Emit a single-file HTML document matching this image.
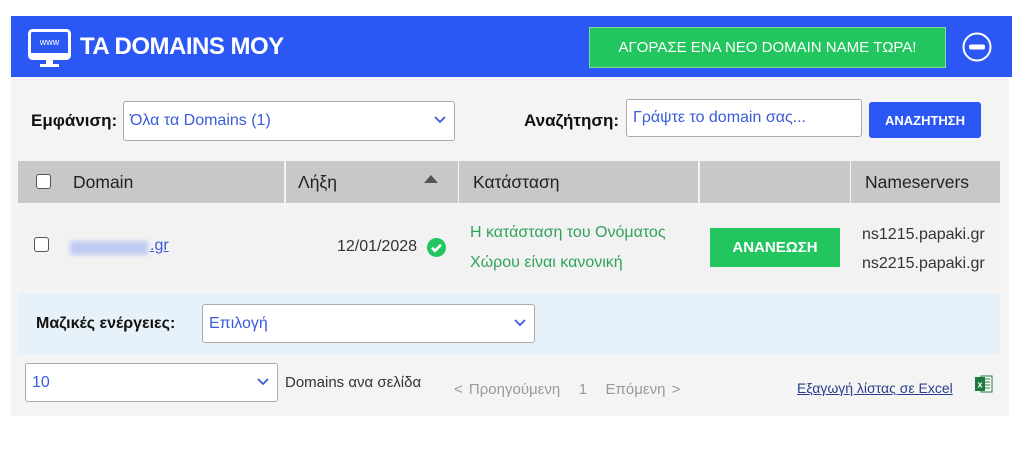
<!DOCTYPE html>
<html><head><meta charset="utf-8">
<style>
*{box-sizing:border-box;margin:0;padding:0}
body{width:1024px;height:454px;background:#fff;position:relative;overflow:hidden;font-family:"Liberation Sans","DejaVu Sans",sans-serif;color:#222}
.a{position:absolute}
.sel{position:absolute;background:#fff;border:1px solid #aaa;border-radius:3px;color:#3b5bdb;font-size:16px;padding-left:6px;display:flex;align-items:center}
.chev{position:absolute;right:8px;top:50%;margin-top:-5px}
.cb{position:absolute;width:15px;height:15px;border:1.5px solid #555;border-radius:3px;background:#fff}
.th{position:absolute;top:161px;height:42px;background:#c8c8c8;font-size:17.5px;display:flex;align-items:center;color:#222}
.td{position:absolute;top:204px;height:86px;background:#f2f2f2}
</style></head><body>
<!-- header -->
<div class="a" style="left:11px;top:16px;width:1001px;height:61px;background:#2b58f5"></div>
<svg class="a" style="left:28px;top:29px" width="43" height="42" viewBox="0 0 43 42">
<rect x="1.5" y="1.5" width="40" height="28" rx="3" fill="none" stroke="#fff" stroke-width="3"/>
<rect x="1.5" y="24" width="40" height="6" fill="#fff"/>
<rect x="18" y="30" width="7" height="5" fill="#fff"/><rect x="12" y="35" width="19" height="3" fill="#fff"/>
<text x="21.5" y="16" text-anchor="middle" font-size="9" fill="#fff" font-family="Liberation Sans">www</text>
</svg>
<div class="a" style="left:80px;top:33px;font-size:24px;font-weight:bold;color:#fff;letter-spacing:-0.5px">TA DOMAINS MOY</div>
<div class="a" style="left:589px;top:27px;width:357px;height:41px;background:#22c55e;border:1px solid #7fd99a;color:#fff;font-size:15px;display:flex;align-items:center;justify-content:center">ΑΓΟΡΑΣΕ ΕΝΑ ΝΕΟ DOMAIN NAME ΤΩΡΑ!</div>
<svg class="a" style="left:962px;top:32px" width="30" height="30"><circle cx="15" cy="15" r="13.5" fill="none" stroke="#fff" stroke-width="2"/><rect x="7" y="12.5" width="16" height="5" rx="2" fill="#fff"/></svg>
<!-- panel -->
<div class="a" style="left:11px;top:77px;width:998px;height:339px;background:#f4f4f4"></div>
<div class="a" style="left:31px;top:111px;font-size:17px;color:#111;font-weight:bold">Εμφάνιση:</div>
<div class="sel" style="left:123px;top:101px;width:332px;height:40px">Όλα τα Domains (1)<svg class="chev" width="12" height="8"><path d="M1 1l5 5 5-5" fill="none" stroke="#3b5bdb" stroke-width="1.8"/></svg></div>
<div class="a" style="left:524px;top:111px;font-size:17px;color:#111;font-weight:bold">Αναζήτηση:</div>
<div class="sel" style="left:626px;top:99px;width:236px;height:38px">Γράψτε το domain σας...</div>
<div class="a" style="left:869px;top:102px;width:112px;height:36px;background:#2b58f5;border-radius:3px;color:#fff;font-size:13px;font-weight:bold;display:flex;align-items:center;justify-content:center">ΑΝΑΖΗΤΗΣΗ</div>
<!-- table header -->
<div class="th" style="left:18px;width:266px;padding-left:55px">Domain</div>
<div class="cb" style="left:36px;top:174px"></div>
<div class="th" style="left:286px;width:172px;padding-left:12px">Λήξη</div>
<svg class="a" style="left:424px;top:175px" width="14" height="8"><path d="M0 8L7 0 14 8z" fill="#555"/></svg>
<div class="th" style="left:459px;width:239px;padding-left:14px">Κατάσταση</div>
<div class="th" style="left:700px;width:150px"></div>
<div class="th" style="left:851px;width:149px;padding-left:14px">Nameservers</div>
<!-- row -->
<div class="td" style="left:18px;width:266px"></div>
<div class="td" style="left:286px;width:172px"></div>
<div class="td" style="left:459px;width:239px"></div>
<div class="td" style="left:700px;width:150px"></div>
<div class="td" style="left:851px;width:149px"></div>
<div class="cb" style="left:34px;top:237px"></div>
<div class="a" style="left:70px;top:241px;width:78px;height:14px;background:#c0cbf2;filter:blur(2px)"></div>
<div class="a" style="left:150px;top:237px;font-size:16px;color:#3b5bdb;text-decoration:underline">.gr</div>
<div class="a" style="left:337px;top:238px;font-size:16px;color:#333">12/01/2028</div>
<svg class="a" style="left:427px;top:238px" width="19" height="19"><circle cx="9.5" cy="9.5" r="9.5" fill="#22c55e"/><path d="M5 9.8l3 3 6-6" fill="none" stroke="#fff" stroke-width="2.6"/></svg>
<div class="a" style="left:470px;top:218px;font-size:16px;color:#2fa35a;line-height:30px">Η κατάσταση του Ονόματος<br>Χώρου είναι κανονική</div>
<div class="a" style="left:710px;top:228px;width:130px;height:39px;background:#22c55e;color:#fff;font-size:15px;font-weight:bold;display:flex;align-items:center;justify-content:center">ΑΝΑΝΕΩΣΗ</div>
<div class="a" style="left:862px;top:220px;font-size:16px;color:#333;line-height:29px">ns1215.papaki.gr<br>ns2215.papaki.gr</div>
<!-- bulk -->
<div class="a" style="left:18px;top:293px;width:982px;height:61px;background:#e6f1f9"></div>
<div class="a" style="left:36px;top:315px;font-size:16px;color:#111;font-weight:bold">Μαζικές ενέργειες:</div>
<div class="sel" style="left:202px;top:304px;width:333px;height:39px">Επιλογή<svg class="chev" width="12" height="8"><path d="M1 1l5 5 5-5" fill="none" stroke="#3b5bdb" stroke-width="1.8"/></svg></div>
<!-- footer -->
<div class="sel" style="left:25px;top:363px;width:253px;height:39px">10<svg class="chev" width="12" height="8"><path d="M1 1l5 5 5-5" fill="none" stroke="#3b5bdb" stroke-width="1.8"/></svg></div>
<div class="a" style="left:285px;top:374px;font-size:15px;color:#333">Domains ανα σελίδα</div>
<div class="a" style="left:454px;top:381px;font-size:15px;color:#999;word-spacing:2px">&lt; Προηγούμενη &nbsp; 1 &nbsp; Επόμενη &gt;</div>
<div class="a" style="left:797px;top:380px;font-size:14px;color:#2b3f8a;text-decoration:underline">Εξαγωγή λίστας σε Excel</div>
<svg class="a" style="left:975px;top:375px" width="18" height="18"><rect x="6" y="1" width="11" height="16" fill="#fff" stroke="#1e7a3c"/><path d="M9 4h6M9 7h6M9 10h6M9 13h6" stroke="#1e7a3c"/><rect x="0" y="2" width="10" height="14" fill="#1e7a3c"/><text x="5" y="12.5" text-anchor="middle" font-size="9" font-weight="bold" fill="#fff" font-family="Liberation Sans">x</text></svg>
</body></html>
